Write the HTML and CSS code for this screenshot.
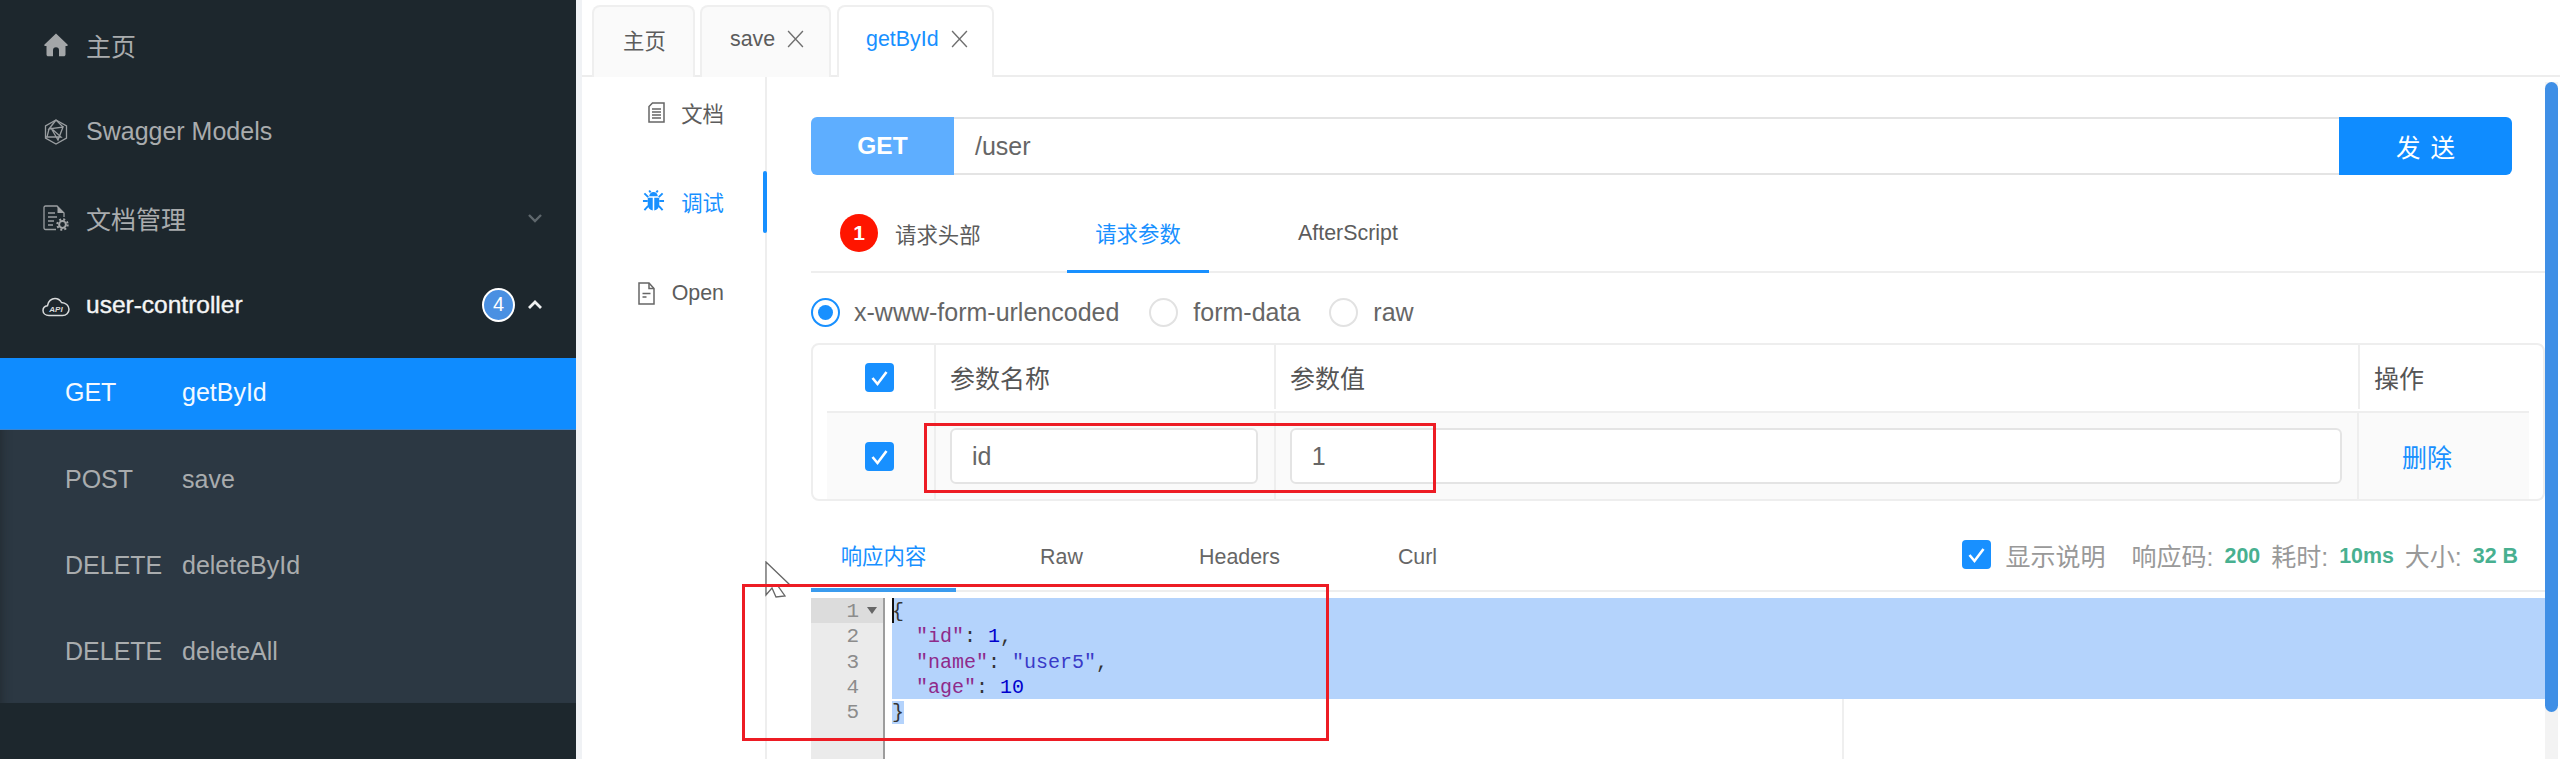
FILE: index.html
```html
<!DOCTYPE html>
<html lang="zh">
<head>
<meta charset="utf-8">
<title>user-controller getById</title>
<link rel="stylesheet" href="styles.css">
</head>
<body>
<aside class="sidebar">
  <nav class="nav">
    <div class="nav-item">
      <svg class="nav-icon" viewBox="0 0 26 26"><path class="ico-fill" d="M13 1.500 1.500 12.500c-.6.7-.2 1.500.6 1.500H3.500v8.500c0 1 .8 1.800 1.800 1.800H10v-6a3 3 0 0 1 6 0v6h4.700c1 0 1.800-.8 1.800-1.800V14h1.400c.8 0 1.200-.8.6-1.500Z"/></svg>
      <span>主页</span>
    </div>
    <div class="nav-item">
      <svg class="nav-icon" viewBox="0 0 26 26"><g class="ico-line"><path d="M13 1 23.500 7v12L13 25 2.500 19V7Z"/><path d="M13 1 6 10l14-2-5 13-7-12 10 9-15 0M13 1l7 7M6 10 4 18"/></g></svg>
      <span>Swagger Models</span>
    </div>
    <div class="nav-item">
      <svg class="nav-icon" viewBox="0 0 26 26"><g class="ico-line"><path d="M13 24.500H2.500a1.500 1.500 0 0 1-1.500-1.500V2.500A1.500 1.500 0 0 1 2.500 1h11.500l7 7v4"/><path d="M5 8h7M5 12h9M5 16h6M5 20h5"/></g><path class="ico-fill" d="M14.500 1.500 21 8h-6.500Z"/><circle class="ico-gear" cx="19.500" cy="19.500" r="3.400"/><circle class="ico-gear-dash" cx="19.500" cy="19.500" r="5.200"/></svg>
      <span>文档管理</span>
      <svg class="chev" viewBox="0 0 16 10"><path d="M2 2l6 6 6-6"/></svg>
    </div>
    <div class="nav-item nav-open">
      <svg class="nav-icon nav-icon-wide" viewBox="0 0 28 22"><path class="ico-line-light" d="M7 20.500C3.500 20.500 1 18.300 1 15.500c0-2.600 2-4.500 4.500-4.800C6 6 9.500 3.500 13 3.500c3 0 5 1.300 6.500 4 4 .2 7.500 3 7.500 6.800 0 3.500-2.800 6.200-6.500 6.200Z"/><text class="cloud-text" x="14" y="16.500" text-anchor="middle">API</text></svg>
      <span class="nav-open-label">user-controller</span>
      <span class="count">4</span>
      <svg class="chev chev-up" viewBox="0 0 16 10"><path d="M2 8l6-6 6 6"/></svg>
    </div>
  </nav>
  <div class="sub">
    <div class="sub-item sub-active"><span class="method">GET</span><span>getById</span></div>
    <div class="sub-item"><span class="method">POST</span><span>save</span></div>
    <div class="sub-item"><span class="method">DELETE</span><span>deleteById</span></div>
    <div class="sub-item"><span class="method">DELETE</span><span>deleteAll</span></div>
  </div>
</aside>
<div class="sep"></div>
<main class="main">
  <div class="tabs">
    <div class="tab tab-home">主页</div>
    <div class="tab tab-save">save<svg class="close" viewBox="0 0 16 17"><path d="M1 1l14 15M15 1 1 16"/></svg></div>
    <div class="tab tab-active">getById<svg class="close" viewBox="0 0 16 17"><path d="M1 1l14 15M15 1 1 16"/></svg></div>
  </div>
  <div class="body">
    <div class="menu">
      <div class="menu-item">
        <svg class="m-ico m-doc" viewBox="0 0 17 21"><path d="M4.500 1H16v19H1V4.500Z"/><path d="M4 7h9M4 10h9M4 13h9M4 16h9"/></svg>
        <span>文档</span>
      </div>
      <div class="menu-item menu-active">
        <svg class="m-bug" viewBox="0 0 24 24"><path d="M7.500 7c0-2.500 2-4.500 4.500-4.500s4.500 2 4.500 4.500Z"/><path d="M6 8.500h5.200V22C8 21.500 6 19 6 16ZM18 8.500h-5.200V22c3.200-.5 5.200-3 5.200-6Z"/><path class="bug-leg" d="M6 12H1M18 12h5M6.500 8 2.500 4M17.500 8l4-4M6.500 17l-4 4.500M17.500 17l4 4.500M9 3 7.500 1M15 3l1.500-2"/></svg>
        <span>调试</span>
      </div>
      <div class="menu-item menu-open">
        <svg class="m-ico m-file" viewBox="0 0 17 23"><path d="M1 1h10l5 5.500V22H1Z"/><path d="M11 1v5.500h5M4.500 11.500h8M4.500 15h4"/></svg>
        <span>Open</span>
      </div>
    </div>
    <div class="content">
      <div class="urlbar">
        <div class="url-method">GET</div>
        <div class="url-input">/user</div>
        <div class="url-send">发送</div>
      </div>
      <div class="req-tabs">
        <div class="req-tab req-head"><span class="req-badge">1</span><span>请求头部</span></div>
        <div class="req-tab req-params">请求参数</div>
        <div class="req-tab req-after">AfterScript</div>
      </div>
      <div class="radios">
        <span class="radio radio-on"></span><span class="radio-label label-a">x-www-form-urlencoded</span>
        <span class="radio"></span><span class="radio-label label-b">form-data</span>
        <span class="radio"></span><span class="radio-label">raw</span>
      </div>
      <div class="table">
        <div class="row row-head">
          <div class="cell c-check"><span class="check"><svg viewBox="0 0 29 29"><path d="M7.500 15l5 6 9-12"/></svg></span></div>
          <div class="cell c-name">参数名称</div>
          <div class="cell c-value">参数值</div>
          <div class="cell c-op">操作</div>
        </div>
        <div class="row row-data">
          <div class="cell c-check"><span class="check"><svg viewBox="0 0 29 29"><path d="M7.500 15l5 6 9-12"/></svg></span></div>
          <div class="cell c-name"><div class="field">id</div></div>
          <div class="cell c-value"><div class="field">1</div></div>
          <div class="cell c-op"><a class="del">删除</a></div>
        </div>
      </div>
      <div class="res-tabs">
        <div class="res-tab res-active">响应内容</div>
        <div class="res-tab">Raw</div>
        <div class="res-tab">Headers</div>
        <div class="res-tab">Curl</div>
        <div class="status">
          <span class="check"><svg viewBox="0 0 29 29"><path d="M7.500 15l5 6 9-12"/></svg></span>
          <span class="st-show">显示说明</span>
          <span class="st-key st-first">响应码:</span><b>200</b>
          <span class="st-key">耗时:</span><b>10ms</b>
          <span class="st-key">大小:</span><b>32 B</b>
        </div>
      </div>
      <div class="editor">
        <div class="gutter">
          <div class="gl gl-active">1<i class="fold"></i></div>
          <div class="gl">2</div>
          <div class="gl">3</div>
          <div class="gl">4</div>
          <div class="gl">5</div>
        </div>
        <div class="code">
          <div class="print-margin"></div>
          <div class="line sel"><span class="caret"></span>{</div>
          <div class="line sel">  <span class="k">"id"</span>: <span class="n">1</span>,</div>
          <div class="line sel">  <span class="k">"name"</span>: <span class="s">"user5"</span>,</div>
          <div class="line sel">  <span class="k">"age"</span>: <span class="n">10</span></div>
          <div class="line"><span class="sel">}</span></div>
        </div>
      </div>
    </div>
  </div>
  <div class="scroll-track"><div class="scroll-thumb"></div></div>
</main>
<svg class="pointer" viewBox="0 0 26 37"><path d="M1 1 25 24 13 25 20 35 11 36 7 27 1 34Z"/></svg>
<div class="mark mark-field"></div>
<div class="mark mark-json"></div>
</body>
</html>
```
FILE: styles.css
```css
* { box-sizing: border-box; }
html, body { margin: 0; padding: 0; height: 759px; overflow: hidden; }
body {
  position: relative;
  display: flex;
  width: 2560px;
  background: #fff;
  font-family: "Liberation Sans", "Noto Sans CJK SC", sans-serif;
  font-size: 21.4px;
  color: #5c5c5c;
}

/* sidebar */
.sidebar { width: 576px; height: 759px; flex: none; background: #1d272d; color: #a9acae; font-size: 25px; }
.nav { padding-top: 2px; height: 350px; }
.nav-item { position: relative; display: flex; align-items: center; height: 86.600px; padding-left: 86px; }
.nav-icon { position: absolute; left: 43px; top: 30px; width: 26px; height: 26px; }
.nav-icon-wide { left: 42px; top: 33px; width: 28px; height: 22px; }
.ico-fill { fill: #a3a6a8; }
.ico-line { fill: none; stroke: #9a9ea1; stroke-width: 1.300; }
.ico-line-light { fill: none; stroke: #d8dadb; stroke-width: 1.500; }
.ico-gear { fill: none; stroke: #a3a6a8; stroke-width: 2; }
.ico-gear-dash { fill: none; stroke: #a3a6a8; stroke-width: 2; stroke-dasharray: 2 2.100; }
.cloud-text { fill: #d8dadb; font-size: 8px; font-weight: 700; font-style: italic; font-family: "Liberation Sans", sans-serif; }
.nav-open { color: #f4f5f5; }
.nav-open-label { font-size: 24.500px; -webkit-text-stroke: .4px #f4f5f5; }
.chev { position: absolute; left: 527px; top: 38px; width: 16px; height: 10px; fill: none; stroke: #5f686d; stroke-width: 2.400; }
.chev-up { stroke: #f0f1f1; stroke-width: 2.800; top: 38px; }
.count {
  position: absolute; left: 482px; top: 26px;
  display: flex; align-items: center; justify-content: center;
  width: 33px; height: 34px;
  border: 2px solid #fff; border-radius: 50%;
  background: #4a90e2; color: #fff; font-size: 20px;
}
.sub { height: 345px; background: #2c3843; box-shadow: inset 6px 6px 10px -4px #232c33; }
.sub-item { display: flex; align-items: center; height: 86px; padding: 2px 0 0 65px; }
.sub-active { height: 72px; margin: 8px 0 5px; padding: 0 0 2px 65px; background: #0f8cff; color: #f3f9ff; border-bottom: 1px solid #3a84cf; }
.method { width: 117px; }
.sep { width: 6px; flex: none; background: #f0f2f5; }

/* main */
.main { position: relative; flex: 1; min-width: 0; height: 759px; }
.tabs { display: flex; gap: 5px; height: 77px; padding: 5px 0 0 10px; border-bottom: 2px solid #ededed; }
.tab {
  display: flex; align-items: center; height: 72px; padding-bottom: 6px;
  border: 2px solid #efefef; border-bottom: none; border-radius: 8px 8px 0 0;
  background: #fafafa;
}
.tab-home { width: 103px; padding-left: 29px; }
.tab-save { width: 131px; padding-left: 28px; }
.tab-active { width: 157px; margin-left: 1px; padding-left: 27px; background: #fff; color: #1890ff; position: relative; z-index: 1; }
.close { width: 17px; height: 18px; margin-left: 12px; fill: none; stroke: #6f6f6f; stroke-width: 1.300; }
.body { display: flex; height: 682px; }
.menu { width: 185px; padding-top: 5px; flex: none; border-right: 2px solid #eeeeee; }
.menu-item { position: relative; display: flex; align-items: center; justify-content: flex-end; gap: 16px; height: 62px; margin-bottom: 27px; padding: 0 41px 2px 0; }
.menu-active { color: #1890ff; }
.menu-active::after { content: ""; position: absolute; right: -2px; top: 0; width: 4px; height: 62px; background: #1890ff; border-radius: 2px; }
.menu-open { margin-top: 29px; padding-bottom: 0; }
.m-ico { fill: none; stroke: #666; stroke-width: 1.500; }
.m-doc { width: 17px; height: 21px; }
.m-file { width: 17px; height: 23px; margin-right: 1px; }
.m-bug { width: 23px; height: 24px; fill: #1890ff; }
.bug-leg { fill: none; stroke: #1890ff; stroke-width: 2; }
.content { width: 1734px; margin-left: 44px; flex: none; }

/* url bar */
.urlbar { display: flex; height: 58px; margin-top: 40px; }
.url-method {
  width: 143px; display: flex; align-items: center; justify-content: center;
  background: #5eaeff; color: #fff; font-size: 24.500px; font-weight: 700;
  border-radius: 6px 0 0 6px;
}
.url-input {
  width: 1385px; display: flex; align-items: center; padding-left: 21px;
  border-top: 2px solid #e4e4e4; border-bottom: 2px solid #e4e4e4;
  font-size: 25px; color: #666;
}
.url-send {
  width: 173px; display: flex; align-items: center; justify-content: center;
  background: #0f8cff; color: #fff; font-size: 24.500px; letter-spacing: 10px; text-indent: 10px;
  border-radius: 0 6px 6px 0;
}

/* request tabs */
.req-tabs { display: flex; height: 98px; border-bottom: 2px solid #eeeeee; }
.req-tab { display: flex; align-items: center; padding-top: 20px; }
.req-head { width: 256px; padding-left: 29px; gap: 17px; }
.req-badge {
  display: flex; align-items: center; justify-content: center;
  width: 38px; height: 38px; border-radius: 50%;
  background: #ff1500; color: #fff; font-size: 21px; font-weight: 700;
}
.req-params {
  width: 142px; justify-content: center; height: 98px; color: #1890ff;
  border-bottom: 3px solid #1890ff;
}
.req-after { margin-left: 89px; }

/* radios */
.radios { display: flex; align-items: center; height: 70px; padding-top: 8px; font-size: 25px; color: #666; }
.radio { width: 29px; height: 29px; margin-right: 15px; border: 2px solid #e2e2e2; border-radius: 50%; flex: none; position: relative; }
.radio-on { border-color: #1890ff; margin-right: 14px; }
.radio-on::after { content: ""; position: absolute; left: 5px; top: 5px; width: 15px; height: 15px; border-radius: 50%; background: #1890ff; }
.label-a { margin-right: 30px; }
.label-b { margin-right: 29px; }

/* table */
.table { height: 158px; border: 2px solid #eeeeee; border-radius: 8px; font-size: 25px; color: #555; }
.row { display: flex; }
.row-head { height: 66px; padding-bottom: 2px; }
.row-data { height: 88px; margin: 0 14px; background: #fafafa; border-top: 2px solid #eeeeee; }
.cell { display: flex; align-items: center; border-right: 2px solid #eeeeee; }
.c-check { width: 123px; justify-content: center; padding-left: 12px; }
.row-data .c-check { width: 109px; justify-content: flex-start; padding-left: 38px; }
.c-name { width: 340px; padding-left: 14px; }
.c-value { width: 1084px; padding-left: 14px; }
.c-op { width: 170px; padding-left: 14px; border-right: none; }
.row-data .c-op { padding-left: 43px; }
.check { display: block; width: 29px; height: 29px; border-radius: 4px; background: #1890ff; flex: none; }
.check svg { display: block; width: 29px; height: 29px; fill: none; stroke: #fff; stroke-width: 2.600; }
.field {
  height: 56px; display: flex; align-items: center; padding-left: 20px;
  background: #fff; border: 2px solid #e4e4e4; border-radius: 6px; color: #666;
}
.c-name .field { width: 308px; }
.c-value .field { width: 1052px; }
.del { color: #1890ff; }

/* response */
.res-tabs { display: flex; height: 91px; gap: 33px; border-bottom: 2px solid #eeeeee; color: #666; }
.res-tab { width: 145px; height: 91px; padding-top: 44px; text-align: center; line-height: 24px; }
.res-active { color: #1890ff; border-bottom: 4px solid #3a9bee; }
.status { display: flex; align-items: center; margin-left: auto; padding: 18px 27px 0 0; color: #999; font-size: 25px; }
.status b { color: #48b090; font-size: 21.400px; margin-left: 11px; padding-top: 3px; }
.st-show { margin-left: 15px; }
.st-key { margin-left: 11px; }
.st-first { margin-left: 26px; }

/* editor */
.editor { display: flex; height: 161px; margin-top: 6px; font-family: "Liberation Mono", monospace; font-size: 20px; line-height: 27.300px; }
.gutter { width: 74px; flex: none; background: #ebebeb; border-right: 2px solid #9d9d9d; color: #8c8c8c; text-align: right; font-size: 21px; }
.gl { position: relative; height: 25.300px; padding-right: 24px; }
.gl-active { background: #dcdcdc; }
.fold { position: absolute; left: 56px; top: 9px; width: 0; height: 0; border: 5px solid transparent; border-top: 7px solid #666; border-bottom: none; }
.code { position: relative; flex: 1; padding-left: 7px; color: #333; }
.print-margin { position: absolute; left: 957px; top: 0; bottom: 0; width: 2px; background: #efefef; }
.line { position: relative; height: 25.300px; white-space: pre; }
.sel { background: #b4d3fc; }
.caret { position: absolute; left: 0; top: 0; width: 2px; height: 25px; background: #111; }
.k { color: #8f2a8a; }
.n { color: #0000cd; }
.s { color: #3a3ac8; }

/* overlays */
.scroll-track { position: absolute; right: 2px; top: 82px; bottom: 0; width: 13px; background: #f3f3f3; }
.scroll-thumb { height: 630px; background: #3f8fe6; border-radius: 7px; }
.pointer { position: absolute; left: 765px; top: 561px; width: 26px; height: 37px; fill: #fff; stroke: #666; stroke-width: 1.300; }
.mark { position: absolute; border: 3px solid #ed1c24; }
.mark-field { left: 924px; top: 423px; width: 512px; height: 70px; }
.mark-json { left: 742px; top: 584px; width: 587px; height: 157px; }
```
